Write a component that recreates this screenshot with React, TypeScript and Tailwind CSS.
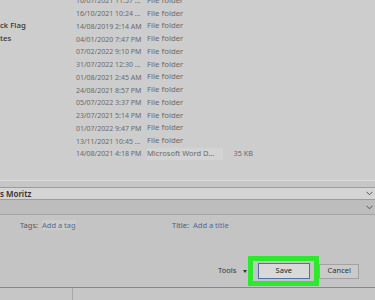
const rows = [
  { name: "", date: "16/07/2021 11:57 ...", type: "File folder", size: "" },
  { name: "", date: "16/10/2021 10:24 ...", type: "File folder", size: "" },
  { name: "ck Flag", date: "14/08/2019 2:14 AM", type: "File folder", size: "" },
  { name: "tes", date: "04/01/2020 7:47 PM", type: "File folder", size: "" },
  { name: "", date: "07/02/2022 9:10 PM", type: "File folder", size: "" },
  { name: "", date: "31/07/2022 12:30 ...", type: "File folder", size: "" },
  { name: "", date: "01/08/2021 2:45 AM", type: "File folder", size: "" },
  { name: "", date: "24/08/2021 8:57 PM", type: "File folder", size: "" },
  { name: "", date: "05/07/2022 3:37 PM", type: "File folder", size: "" },
  { name: "", date: "23/07/2021 5:14 PM", type: "File folder", size: "" },
  { name: "", date: "01/07/2022 9:47 PM", type: "File folder", size: "" },
  { name: "", date: "13/11/2021 10:45 ...", type: "File folder", size: "" },
  { name: "", date: "14/08/2021 4:18 PM", type: "Microsoft Word D...", size: "35 KB" },
];

function Chevron() {
  return (
    <svg width="7" height="5" viewBox="0 0 7 5" className="mr-[1px]">
      <path d="M0.5 0.8 L3.5 3.8 L6.5 0.8" fill="none" stroke="#555" strokeWidth="1" />
    </svg>
  );
}

export default function App() {
  return (
    <div className="flex h-[300px] w-[375px] flex-col overflow-hidden bg-[#cdcdcd] font-['Noto_Sans',sans-serif]">
      {/* file list */}
      <div className="h-[180px] shrink-0 overflow-hidden">
        <div className="-mt-[5.5px] flex flex-col">
          {rows.map((r) => (
            <div key={r.date} className="flex h-[12.75px] items-center leading-none text-[#6a6a6a]">
              <div className="w-[76px] text-[7.8px] font-medium text-[#333]">{r.name}</div>
              <div className="w-[71px] whitespace-nowrap text-[7px]">{r.date}</div>
              <div
                className={
                  r.size
                    ? "flex h-full w-[76px] items-center whitespace-nowrap bg-[#d3d3d3] text-[7.5px]"
                    : "w-[76px] text-[7.8px]"
                }
              >
                {r.type}
              </div>
              <div className="w-[30px] text-right text-[7.3px]">{r.size}</div>
            </div>
          ))}
        </div>
      </div>

      <div className="h-[1px] shrink-0 bg-[#dadada]" />
      <div className="h-[6px] shrink-0 bg-[#c6c6c6]" />

      {/* file name */}
      <div className="flex h-[13px] shrink-0 items-center justify-between border-y border-[#9c9c9c] bg-[#d4d4d4] pr-[1px]">
        <span className="text-[8px] font-semibold leading-none text-[#2e2e2e]">s Moritz</span>
        <Chevron />
      </div>

      {/* save as type */}
      <div className="flex h-[15px] shrink-0 items-center justify-end border-b border-[#a4a4a4] bg-[#bdbdbd] pr-[1px]">
        <Chevron />
      </div>

      {/* metadata panel */}
      <div className="flex h-[72px] shrink-0 flex-col bg-[#c4c4c4]">
        <div className="mt-[7px] flex items-center text-[7.5px] leading-none">
          <span className="ml-[20px] w-[22px] text-[#575757]">Tags:</span>
          <span className="w-[130px]">
            <span className="bg-[#cbcbcb] text-[#4d6a98]">Add a tag</span>
          </span>
          <span className="w-[21px] text-[#575757]">Title:</span>
          <span className="text-[#4d6a98]">Add a title</span>
        </div>

        <div className="mt-auto mb-[1px] flex items-center">
          <span className="ml-[218px] text-[7.5px] leading-none text-[#333]">Tools</span>
          <span className="ml-[7px] h-0 w-0 border-x-[2.5px] border-t-[3px] border-x-transparent border-t-[#333]" />
          <div className="ml-[1px] flex h-[30px] w-[71px] items-center justify-center border-[5px] border-[#2ee82e]">
            <div className="flex h-[16px] w-[52px] items-center justify-center border border-[#4f71a6] bg-[#d9d9d9] text-[7.5px] leading-none text-[#222]">
              Save
            </div>
          </div>
          <div className="flex h-[15px] w-[40px] items-center justify-center border border-[#a2a2a2] bg-[#cacaca] text-[7.5px] leading-none text-[#333]">
            Cancel
          </div>
        </div>
      </div>

      {/* footer */}
      <div className="flex min-h-0 flex-1 border-t border-[#888] bg-[#c6c6c6]">
        <div className="w-[73px] border-r border-[#a8a8a8]" />
      </div>
    </div>
  );
}
